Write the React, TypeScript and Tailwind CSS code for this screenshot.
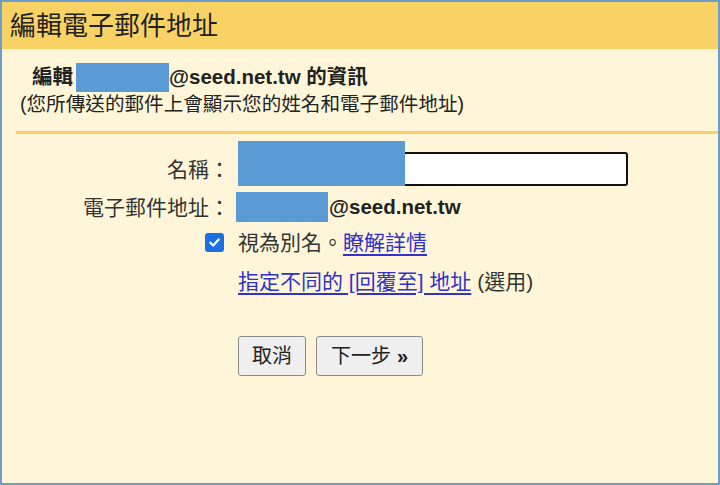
import React from "react";

const font = { fontFamily: '"Liberation Sans", "Noto Sans CJK TC", sans-serif' };

export default function App() {
  return (
    <div
      className="w-[720px] h-[485px] border-2 border-[#6d9dcb] bg-[#fff6da] text-[#222] overflow-hidden"
      style={font}
    >
      <div className="h-[47px] bg-[#f9d266] pl-[8px] flex items-center text-[26px] leading-none">
        編輯電子郵件地址
      </div>

      <div className="pl-[18px]">
        <div className="mt-[14px] ml-[12px] h-[29px] flex items-center text-[20.5px] font-bold leading-none">
          <span>編輯</span>
          <span className="inline-block w-[93px] h-[29px] bg-[#5b9bd5] ml-[3px]" />
          <span>@seed.net.tw 的資訊</span>
        </div>
        <div className="mt-[1px] h-[24px] flex items-center text-[19.6px] leading-none">
          (您所傳送的郵件上會顯示您的姓名和電子郵件地址)
        </div>
      </div>
      <div className="mt-[14px] ml-[14px] h-[3px] bg-[#f9d266]" />

      <div className="flex flex-col text-[21px] leading-none">
        <div className="mt-[18px] flex items-center h-[34px]">
          <div className="w-[228px] text-right text-[#333]">名稱：</div>
          <div className="ml-[8px] relative w-[390px] h-[34px] border-2 border-[#111] rounded-[3px] bg-white">
            <div className="absolute left-[-2px] top-[-13px] w-[167px] h-[45px] bg-[#5b9bd5]" />
          </div>
        </div>

        <div className="mt-[6px] flex items-center h-[30px]">
          <div className="w-[228px] text-right text-[#333]">電子郵件地址：</div>
          <div className="ml-[6px] w-[92px] h-[30px] bg-[#5b9bd5]" />
          <div className="ml-[1px] font-bold text-[20.5px]">@seed.net.tw</div>
        </div>

        <div className="mt-[5px] flex items-center h-[30px]">
          <div className="w-[228px] flex justify-end pr-[6px]">
            <div className="w-[19px] h-[19px] rounded-[3px] bg-[#1b6fe0] flex items-center justify-center">
              <svg width="13" height="13" viewBox="0 0 14 14">
                <path d="M2.5 7.3 L5.6 10.2 L11.5 3.8" fill="none" stroke="white" strokeWidth="2.4" strokeLinecap="round" strokeLinejoin="round" />
              </svg>
            </div>
          </div>
          <div className="ml-[8px] text-[#333]">
            視為別名。<span className="text-[#3232c8] underline underline-offset-[4px]">瞭解詳情</span>
          </div>
        </div>

        <div className="mt-[9px] flex items-center h-[30px]">
          <div className="w-[228px]" />
          <div className="ml-[8px] text-[#333]">
            <span className="text-[#3232c8] underline underline-offset-[4px]">指定不同的 [回覆至] 地址</span> (選用)
          </div>
        </div>

        <div className="mt-[40px] flex items-center">
          <div className="w-[228px]" />
          <div className="ml-[8px] flex gap-[10px]">
            <button className="w-[68px] h-[40px] bg-[#efefef] border border-[#8a8a8a] rounded-[3px] text-[20px] text-[#222] flex items-center justify-center" style={font}>
              取消
            </button>
            <button className="w-[107px] h-[40px] bg-[#efefef] border border-[#8a8a8a] rounded-[3px] text-[20px] text-[#222] flex items-center justify-center" style={font}>
              下一步 <span className="font-bold ml-[6px]">»</span>
            </button>
          </div>
        </div>
      </div>
    </div>
  );
}
